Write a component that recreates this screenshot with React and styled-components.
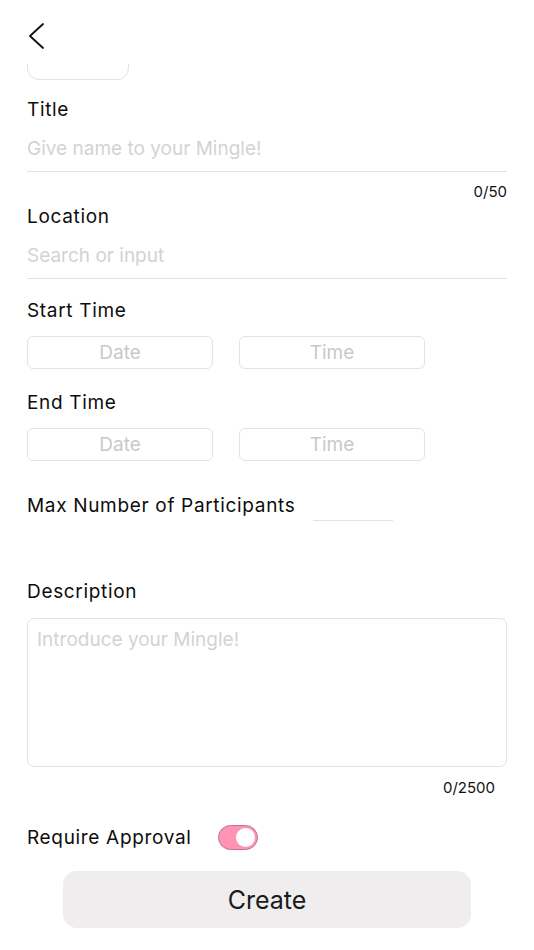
import React, { useState } from "react";
import styled, { createGlobalStyle } from "styled-components";

const GlobalStyle = createGlobalStyle`
  * {
    box-sizing: border-box;
  }
  body {
    margin: 0;
    background: #fff;
    font-family: Inter, "Noto Sans", sans-serif;
    color: #111;
  }
`;

const Screen = styled.div`
  height: 950px;
  display: flex;
  flex-direction: column;
  overflow: hidden;
  background: #fff;
`;

const Header = styled.header`
  height: 64px;
  flex: none;
  padding: 22px 0 0 28px;
`;

const BackButton = styled.button`
  border: none;
  background: none;
  padding: 0;
  display: block;
  cursor: pointer;
`;

const Body = styled.main`
  flex: 1;
  overflow: hidden;
  padding: 0 27px;
  display: flex;
  flex-direction: column;
`;

const PhotoSlot = styled.div`
  flex: none;
  width: 102px;
  height: 100px;
  margin-top: -84px;
  border: 1px solid #e2e2e2;
  border-radius: 12px;
`;

const Label = styled.div`
  font-size: 19px;
  font-weight: 400;
  letter-spacing: 0.67px;
  line-height: 24px;
  color: #0d0d0d;
  margin-top: ${(p) => p.$mt}px;
  white-space: nowrap;
`;

const TextInput = styled.input`
  width: 100%;
  height: 44px;
  margin-top: 6px;
  padding: 8px 0 10px;
  border: none;
  border-bottom: 1px solid #e3e3e3;
  font-family: inherit;
  font-size: 19px;
  color: #111;
  outline: none;
  background: transparent;
  &::placeholder {
    color: #d3d3d3;
  }
`;

const Counter = styled.div`
  font-size: 15px;
  line-height: 18px;
  text-align: right;
  color: #111;
  margin-top: ${(p) => p.$mt}px;
  padding-right: ${(p) => p.$inset || 0}px;
`;

const PickerRow = styled.div`
  display: flex;
  gap: 26px;
  margin-top: 13px;
`;

const PickerBox = styled.button`
  width: 186px;
  height: 33px;
  border: 1px solid #e3e3e3;
  border-radius: 6px;
  background: #fff;
  font-family: inherit;
  font-size: 19px;
  color: #c9c9c9;
  display: flex;
  align-items: center;
  justify-content: center;
  padding: 0;
`;

const InlineRow = styled.div`
  display: flex;
  align-items: flex-start;
  margin-top: ${(p) => p.$mt}px;
`;

const NumberInput = styled.input`
  width: 80px;
  height: 27px;
  margin-left: 18px;
  border: none;
  border-bottom: 1px solid #e3e3e3;
  font-family: inherit;
  font-size: 19px;
  outline: none;
  text-align: center;
`;

const TextArea = styled.textarea`
  width: 100%;
  height: 149px;
  margin-top: 14px;
  padding: 9px 9px;
  border: 1px solid #e3e3e3;
  border-radius: 7px;
  font-family: inherit;
  font-size: 19px;
  color: #111;
  resize: none;
  outline: none;
  &::placeholder {
    color: #d3d3d3;
  }
`;

const ApprovalRow = styled.div`
  display: flex;
  align-items: center;
  gap: 26px;
  margin-top: 28px;
`;

const Toggle = styled.button`
  position: relative;
  width: 40px;
  height: 25px;
  padding: 0;
  border-radius: 13px;
  border: 1px solid ${(p) => (p.$on ? "#c17290" : "#cfcfcf")};
  background: ${(p) => (p.$on ? "#ff93b6" : "#e9e9e9")};
  cursor: pointer;
  &::after {
    content: "";
    position: absolute;
    top: 2px;
    left: ${(p) => (p.$on ? "17px" : "2px")};
    width: 19px;
    height: 19px;
    border-radius: 50%;
    background: #fff;
  }
`;

const CreateButton = styled.button`
  align-self: center;
  width: 408px;
  height: 57px;
  margin-top: 21px;
  border: none;
  border-radius: 14px;
  background: #efedee;
  font-family: inherit;
  font-size: 25px;
  color: #1a1a1a;
  cursor: pointer;
`;

const ChevronLeft = () => (
  <svg width="18" height="28" viewBox="0 0 18 28" fill="none">
    <polyline
      points="15,2 2,14 15,26"
      stroke="#111"
      strokeWidth="1.8"
      strokeLinecap="round"
      strokeLinejoin="round"
    />
  </svg>
);

const TimePicker = ({ label, mt }) => (
  <>
    <Label $mt={mt}>{label}</Label>
    <PickerRow>
      <PickerBox>Date</PickerBox>
      <PickerBox>Time</PickerBox>
    </PickerRow>
  </>
);

export default function App() {
  const [approval, setApproval] = useState(true);

  return (
    <Screen>
      <GlobalStyle />
      <Header>
        <BackButton aria-label="Back">
          <ChevronLeft />
        </BackButton>
      </Header>
      <Body>
        <PhotoSlot />

        <Label $mt={18}>Title</Label>
        <TextInput placeholder="Give name to your Mingle!" />
        <Counter $mt={11}>0/50</Counter>

        <Label $mt={4}>Location</Label>
        <TextInput placeholder="Search or input" />

        <TimePicker label="Start Time" mt={20} />
        <TimePicker label="End Time" mt={22} />

        <InlineRow $mt={33}>
          <Label $mt={0}>Max Number of Participants</Label>
          <NumberInput type="text" />
        </InlineRow>

        <Label $mt={59}>Description</Label>
        <TextArea placeholder="Introduce your Mingle!" />
        <Counter $mt={12} $inset={12}>
          0/2500
        </Counter>

        <ApprovalRow>
          <Label $mt={0}>Require Approval</Label>
          <Toggle $on={approval} onClick={() => setApproval(!approval)} />
        </ApprovalRow>

        <CreateButton>Create</CreateButton>
      </Body>
    </Screen>
  );
}
